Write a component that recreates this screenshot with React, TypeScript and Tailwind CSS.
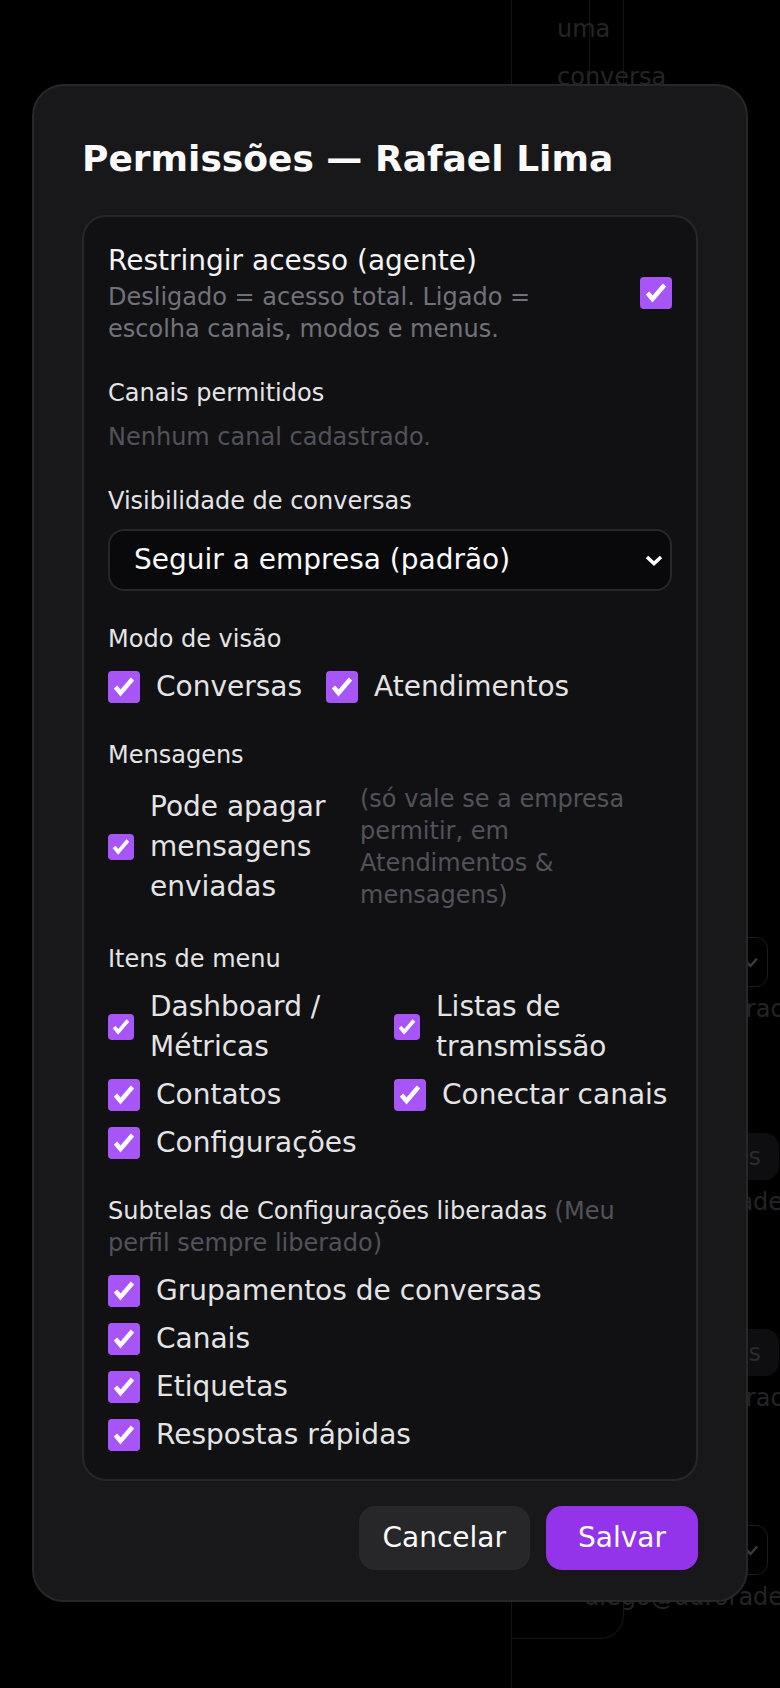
import type { ReactNode } from "react";

function CheckBox({ className }: { className: string }) {
  return (
    <span
      className={`flex shrink-0 items-center justify-center rounded-[4px] bg-[#a855f7] ${className}`}
    >
      <svg viewBox="0 0 32 32" className="h-full w-full">
        <path
          d="M7.5 16 12.5 22 24.5 8"
          fill="none"
          stroke="#ffffff"
          strokeWidth="4.5"
        />
      </svg>
    </span>
  );
}

function Option({ label, small }: { label: string; small?: boolean }) {
  return (
    <label className="flex items-center gap-4 text-[28px] leading-[40px] text-[#e4e4e7]">
      <CheckBox className={small ? "h-[26px] w-[26px]" : "h-8 w-8"} />
      <span>{label}</span>
    </label>
  );
}

function Section({ title, children }: { title: ReactNode; children: ReactNode }) {
  return (
    <div className="flex flex-col gap-3">
      <p className="text-[24px] leading-[32px] text-[#e4e4e7]">{title}</p>
      {children}
    </div>
  );
}

function BackgroundPage() {
  const rows = [
    { kind: "box", email: "rafaela@auroradesk.com" },
    { kind: "pill", email: "diego@auroradesk.com" },
    { kind: "pill", email: "rafaela@auroradesk.com" },
    { kind: "box", email: "diego@auroradesk.com" },
  ];

  return (
    <div className="flex h-full">
      <div className="w-[511px] shrink-0" />
      <div className="h-full flex-1 border-l border-[#151517]">
        <div className="h-[1639px] w-[112px] whitespace-nowrap rounded-br-[24px] border-b border-r border-[#151517] text-[24px] text-[#242427]">
          <div className="h-[120px] w-[78px] border-r border-[#151517] pl-[45px] pt-[5px] leading-[48px]">
            <p>uma</p>
            <p>conversa</p>
          </div>
          <div className="ml-[72px] mt-[817px] w-[197px]">
            {rows.map((row, index) => (
              <div key={index} className="h-[196px]">
                {row.kind === "box" ? (
                  <div className="ml-[152px] flex h-[50px] w-[32px] items-center justify-center rounded-[12px] border border-[#1c1c1f]">
                    <svg viewBox="0 0 16 16" className="h-4 w-4">
                      <path
                        d="M3 8.5 6.5 12 13 4.5"
                        fill="none"
                        stroke="#3a3a3e"
                        strokeWidth="2.5"
                      />
                    </svg>
                  </div>
                ) : (
                  <div className="ml-[75px] flex h-[47px] w-[120px] items-center justify-end rounded-[14px] bg-[#0e0e10] pr-[18px] text-[#2a2a2d]">
                    Permissões
                  </div>
                )}
                <p className="mt-[6px] leading-[32px]">{row.email}</p>
              </div>
            ))}
          </div>
        </div>
      </div>
    </div>
  );
}

function PermissionsModal() {
  return (
    <div className="rounded-[32px] border-2 border-[#27272a] bg-[#18181b] px-12 pb-[30px] pt-12">
      <h2 className="mb-[31px] text-[36px] font-bold leading-[50px] text-[#fafafa]">
        Permissões — Rafael Lima
      </h2>

      <div className="flex flex-col gap-8 rounded-[24px] border-2 border-[#27272a] bg-[#111113] p-6">
        <div className="flex items-center justify-between gap-6">
          <div>
            <p className="text-[28px] leading-[40px] text-[#f4f4f5]">
              Restringir acesso (agente)
            </p>
            <p className="max-w-[508px] text-[24px] leading-[32px] text-[#71717a]">
              Desligado = acesso total. Ligado = escolha canais, modos e menus.
            </p>
          </div>
          <CheckBox className="h-8 w-8" />
        </div>

        <Section title="Canais permitidos">
          <p className="text-[24px] leading-[32px] text-[#52525b]">
            Nenhum canal cadastrado.
          </p>
        </Section>

        <Section title="Visibilidade de conversas">
          <div className="flex h-[62px] items-center justify-between rounded-[16px] border-2 border-[#27272a] bg-[#09090b] pl-6 pr-[7px]">
            <span className="text-[28px] leading-[40px] text-[#fafafa]">
              Seguir a empresa (padrão)
            </span>
            <svg viewBox="0 0 18 11" className="h-[11px] w-[18px]">
              <path
                d="M2 2 9 8.5 16 2"
                fill="none"
                stroke="#ffffff"
                strokeWidth="3.5"
              />
            </svg>
          </div>
        </Section>

        <Section title="Modo de visão">
          <div className="flex gap-6">
            <Option label="Conversas" />
            <Option label="Atendimentos" />
          </div>
        </Section>

        <Section title="Mensagens">
          <div className="flex items-center gap-6">
            <label className="flex w-[228px] shrink-0 items-center gap-4 text-[28px] leading-[40px] text-[#e4e4e7]">
              <CheckBox className="h-[26px] w-[26px]" />
              <span>Pode apagar mensagens enviadas</span>
            </label>
            <span className="flex-1 text-[24px] leading-[32px] text-[#52525b]">
              (só vale se a empresa permitir, em Atendimentos &amp; mensagens)
            </span>
          </div>
        </Section>

        <Section title="Itens de menu">
          <div className="grid grid-cols-2 gap-2">
            <Option label="Dashboard / Métricas" small />
            <Option label="Listas de transmissão" small />
            <Option label="Contatos" />
            <Option label="Conectar canais" />
            <Option label="Configurações" />
          </div>
        </Section>

        <Section
          title={
            <>
              Subtelas de Configurações liberadas{" "}
              <span className="text-[#52525b]">(Meu perfil sempre liberado)</span>
            </>
          }
        >
          <div className="flex flex-col gap-2">
            <Option label="Grupamentos de conversas" />
            <Option label="Canais" />
            <Option label="Etiquetas" />
            <Option label="Respostas rápidas" />
          </div>
        </Section>
      </div>

      <div className="mt-[25px] flex justify-end gap-4">
        <button className="h-16 rounded-[16px] bg-[#27272a] px-6 text-[28px] text-[#fafafa]">
          Cancelar
        </button>
        <button className="h-16 rounded-[16px] bg-[#9333ea] px-8 text-[28px] text-white">
          Salvar
        </button>
      </div>
    </div>
  );
}

export default function App() {
  return (
    <div className="relative h-[1688px] w-full overflow-hidden bg-black font-['DejaVu_Sans',sans-serif]">
      <BackgroundPage />
      <div className="absolute inset-0 px-8 pt-[84px]">
        <PermissionsModal />
      </div>
    </div>
  );
}
